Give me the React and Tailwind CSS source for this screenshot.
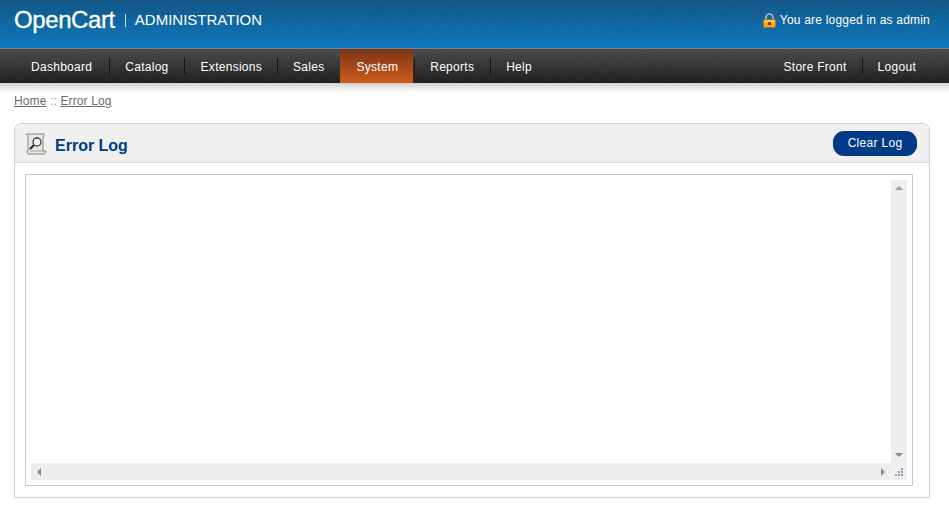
function Lock() {
  return (
    <svg width="13" height="15" viewBox="0 0 13 15" className="mr-[4px] shrink-0">
      <path d="M3 7V4.500a3.500 3.500 0 0 1 7 0V7" fill="none" stroke="#b9bcc0" strokeWidth="1.600" />
      <rect x="0.5" y="6.5" width="12" height="8" rx="1" fill="#f0a51e" stroke="#b8720f" />
      <rect x="1.5" y="7.5" width="10" height="2" fill="#ffd568" />
      <rect x="5" y="9" width="3" height="3" fill="#6b4208" />
    </svg>
  );
}

function ScrollIcon() {
  return (
    <svg width="22" height="22" viewBox="0 0 22 22" className="shrink-0">
      <path d="M1 1h18c-1 2-1 4-1 6v11h3c0 2-1 3-2 3H4c-1.500 0-2-1-2-3h1V4C3 3 2 2 1 1z" fill="#e6e6de" stroke="#85867c" />
      <path d="M5 18h13" stroke="#a5a598" />
      <circle cx="12" cy="9" r="4" fill="#f6f8fa" stroke="#3b3d3d" strokeWidth="1.300" />
      <path d="M9 12l-4 4" stroke="#222" strokeWidth="2" />
    </svg>
  );
}

function Sep({ className = "" }) {
  return <span className={"h-[16px] w-px bg-[#141414] " + className} />;
}

export default function App() {
  return (
    <div className="min-h-[520px] bg-white font-['Liberation_Sans',Arial,sans-serif] text-[12px] text-[#000]">
      <div className="flex h-[48px] items-start justify-between bg-[repeating-linear-gradient(135deg,rgba(255,255,255,0.03)_0_1px,transparent_1px_3px),linear-gradient(to_bottom,#0f5485,#0c78be)] pl-[14px] pr-[19px] text-white">
        <div className="flex items-center pt-[5px]">
          <span className="text-[24px] leading-[30px] tracking-[-0.4px] [-webkit-text-stroke:0.3px_white]">OpenCart</span>
          <span className="ml-[10px] h-[13px] w-px bg-[#d5e5f0]" />
          <span className="ml-[9px] text-[15px]">ADMINISTRATION</span>
        </div>
        <div className="flex items-center pt-[11px] tracking-[0.2px]">
          <Lock />
          <span>You are logged in as admin</span>
        </div>
      </div>

      <div className="flex h-[35px] items-center justify-between border-t border-[#7b8288] bg-[repeating-linear-gradient(135deg,rgba(255,255,255,0.02)_0_1px,transparent_1px_3px),linear-gradient(to_bottom,#4b4a49,#201f20)] pl-[16px] pr-[17px] tracking-[0.28px] text-white">
        <div className="flex items-center [&>a]:pt-[2px]">
          <a className="pl-[15px] pr-[17px]">Dashboard</a>
          <Sep />
          <a className="pl-[15px] pr-[15px]">Catalog</a>
          <Sep />
          <a className="pl-[16px] pr-[15px]">Extensions</a>
          <Sep />
          <a className="pl-[15px] pr-[16px]">Sales</a>
          <a className="flex h-[34px] items-center pl-[16px] pr-[15px] bg-[linear-gradient(to_bottom,#7a3417,#cf5a1e)]">System</a>
          <Sep className="ml-px" />
          <a className="pl-[15px] pr-[16px]">Reports</a>
          <Sep />
          <a className="pl-[15px] pr-[16px]">Help</a>
        </div>
        <div className="flex items-center [&>a]:pt-[2px]">
          <a className="pl-[15px] pr-[15px]">Store Front</a>
          <Sep />
          <a className="pl-[15px] pr-[16px]">Logout</a>
        </div>
      </div>
      <div className="h-[9px] bg-[linear-gradient(to_bottom,#d0d0d0,#ffffff)]" />

      <div className="px-[14px] pt-[2px] leading-[14px] tracking-[0.13px] text-[#6a6a6a]">
        <a className="underline">Home</a>
        <span className="text-[#999]"> :: </span>
        <a className="underline">Error Log</a>
      </div>

      <div className="mx-[14px] mt-[15px] w-[916px] rounded-tl-[7px] rounded-tr-[7px] border border-[#cfcfcb]">
        <div className="flex h-[39px] items-center justify-between rounded-tl-[7px] rounded-tr-[7px] border-b border-[#dcdcdc] bg-[conic-gradient(#f5f3f6_25%,#ecedeb_0_50%,#f5f3f6_0_75%,#ecedeb_0)] bg-[length:2px_2px] pl-[10px] pr-[12px]">
          <div className="flex items-center gap-[8px] pt-[2px]">
            <ScrollIcon />
            <h1 className="pt-[3px] text-[16px] font-bold text-[#003a88]">Error Log</h1>
          </div>
          <a className="flex h-[25px] w-[84px] items-center justify-center rounded-[11px] bg-[#003a88] tracking-[0.3px] text-white">
            Clear Log
          </a>
        </div>

        <div className="px-[10px] py-[11px]">
          <div className="flex h-[312px] w-[888px] flex-col border border-[#c8c8c8] px-[5px] pt-[5px] pb-[5px]">
            <div className="flex min-h-0 flex-1">
              <div className="flex-1" />
              <div className="flex w-[16px] flex-col items-center justify-between bg-[#eeedef] py-[6px]">
                <div className="h-0 w-0 border-x-[4px] border-b-[4px] border-x-transparent border-b-[#9a9a9a]" />
                <div className="h-0 w-0 border-x-[4px] border-t-[4px] border-x-transparent border-t-[#8a8a8a]" />
              </div>
            </div>
            <div className="flex h-[17px]">
              <div className="flex flex-1 items-center justify-between bg-[#eeedef] px-[6px]">
                <div className="h-0 w-0 border-y-[4px] border-r-[4px] border-y-transparent border-r-[#8a8a8a]" />
                <div className="h-0 w-0 border-y-[4px] border-l-[4px] border-y-transparent border-l-[#8a8a8a]" />
              </div>
              <div className="flex w-[16px] items-end justify-end bg-[#f0eff1] p-[3px]">
                <svg width="10" height="10" viewBox="0 0 10 10" fill="#9a97a8">
                  <rect x="7" y="1" width="2" height="2" />
                  <rect x="4" y="4" width="2" height="2" />
                  <rect x="7" y="4" width="2" height="2" />
                  <rect x="1" y="7" width="2" height="2" />
                  <rect x="4" y="7" width="2" height="2" />
                  <rect x="7" y="7" width="2" height="2" />
                </svg>
              </div>
            </div>
          </div>
        </div>
      </div>
    </div>
  );
}
